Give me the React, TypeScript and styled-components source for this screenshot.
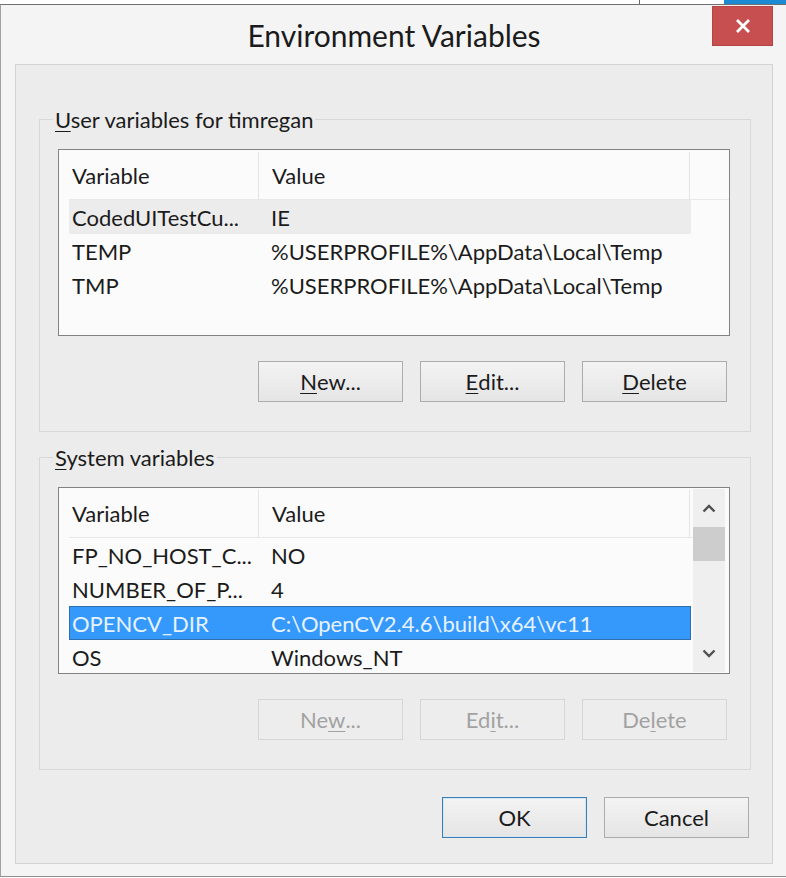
import React from "react";
import styled, { createGlobalStyle } from "styled-components";

const GlobalStyle = createGlobalStyle`
  html, body { margin: 0; padding: 0; background: #ffffff; }
  body { font-family: "Lato", "Open Sans", sans-serif; color: #1b1b1b; }
  * { box-sizing: border-box; }
`;

const Page = styled.div`
  width: 786px;
  height: 878px;
  overflow: hidden;
  background: #ffffff;
  display: flex;
  flex-direction: column;
`;

const BackStrip = styled.div`
  height: 4px;
  display: flex;
  flex: none;
`;

const BackPane = styled.div<{ $w: number; $bg: string; $edge?: boolean }>`
  width: ${(p) => p.$w}px;
  flex: none;
  background: ${(p) => p.$bg};
  border-right: ${(p) => (p.$edge ? "1px solid #6a6a6a" : "none")};
`;

const Dialog = styled.div`
  height: 873px;
  flex: none;
  background: #f5f4f4;
  border-top: 1px solid #6e6e6e;
  border-left: 1px solid #a0a0a0;
  border-bottom: 1px solid #8c8c8c;
  padding: 0 13px 12px 14px;
  display: flex;
  flex-direction: column;
`;

const TitleBar = styled.div`
  height: 59px;
  flex: none;
  display: grid;
  grid-template-columns: 61px 1fr 61px;
  align-items: start;
`;

const Title = styled.div`
  grid-column: 2;
  align-self: center;
  text-align: center;
  font-size: 30px;
  line-height: 34px;
  padding-top: 1px;
  color: #1b1b1b;
`;

const CloseButton = styled.div`
  grid-column: 3;
  margin-top: 1px;
  width: 61px;
  height: 40px;
  background: #c84f4f;
  border: 1px solid #b54444;
  display: flex;
  align-items: center;
  justify-content: center;
`;

const Panel = styled.div`
  height: 800px;
  flex: none;
  background: #ececec;
  border: 1px solid #d3d3d3;
  padding: 54px 21px 25px 23px;
  display: flex;
  flex-direction: column;
`;

const Group = styled.div<{ $gap?: number }>`
  border: 1px solid #d8d8d8;
  margin-top: ${(p) => p.$gap ?? 0}px;
  padding: 0 20px 29px 18px;
  display: flex;
  flex-direction: column;
`;

const Legend = styled.div`
  align-self: flex-start;
  margin: -15px 0 0 -5px;
  padding: 0 2px;
  height: 30px;
  line-height: 30px;
  font-size: 22px;
  background: #ececec;
  color: #1b1b1b;
`;

const Mn = styled.span`
  text-decoration: underline;
  text-decoration-thickness: 1px;
  text-underline-offset: 3px;
`;

const List = styled.div`
  margin-top: 14px;
  height: 187px;
  border: 1px solid #828282;
  background: #fbfbfb;
  display: flex;
  overflow: hidden;
`;

const ListMain = styled.div`
  flex: 1;
  padding-left: 10px;
  display: flex;
  flex-direction: column;
  min-width: 0;
`;

const Header = styled.div`
  height: 50px;
  flex: none;
  display: grid;
  grid-template-columns: 189px 432px;
  border-bottom: 1px solid #e8e8e8;
  font-size: 22px;
`;

const HeaderCell = styled.div<{ $second?: boolean }>`
  display: flex;
  align-items: center;
  padding-left: ${(p) => (p.$second ? 13 : 3)}px;
  margin: 2px 0 0;
  border-left: ${(p) => (p.$second ? "1px solid #e4e4e4" : "none")};
  border-right: ${(p) => (p.$second ? "1px solid #e4e4e4" : "none")};
`;

type RowKind = "plain" | "soft" | "selected";

const Row = styled.div<{ $kind: RowKind }>`
  height: 34px;
  flex: none;
  width: 622px;
  display: grid;
  grid-template-columns: 189px 432px;
  align-items: center;
  font-size: 22px;
  white-space: nowrap;
  background: ${(p) =>
    p.$kind === "selected" ? "#3598fb" : p.$kind === "soft" ? "#ececec" : "transparent"};
  border: 1px solid ${(p) => (p.$kind === "selected" ? "#2e6fb0" : "transparent")};
  color: ${(p) => (p.$kind === "selected" ? "#e6f3ff" : "#1b1b1b")};
`;

const Cell = styled.div<{ $second?: boolean }>`
  padding-left: ${(p) => (p.$second ? 12 : 2)}px;
  overflow: hidden;
`;

const ScrollBar = styled.div`
  width: 32px;
  flex: none;
  margin: 1px 4px 1px 0;
  background: #efefef;
  display: flex;
  flex-direction: column;
`;

const ArrowBox = styled.div`
  height: 38px;
  flex: none;
  display: flex;
  align-items: center;
  justify-content: center;
`;

const Thumb = styled.div`
  height: 34px;
  flex: none;
  background: #cdcdcd;
`;

const Track = styled.div`
  flex: 1;
`;

const ButtonRow = styled.div<{ $top: number; $right: number }>`
  display: flex;
  justify-content: flex-end;
  gap: 17px;
  margin-top: ${(p) => p.$top}px;
  padding-right: ${(p) => p.$right}px;
`;

const Button = styled.div<{ $disabled?: boolean; $default?: boolean }>`
  width: 145px;
  height: 41px;
  display: flex;
  align-items: center;
  justify-content: center;
  font-size: 22px;
  border: 1px solid
    ${(p) => (p.$default ? "#3d7db3" : p.$disabled ? "#d6d6d6" : "#acacac")};
  background: ${(p) =>
    p.$disabled ? "#ededed" : "linear-gradient(#f3f3f3, #e5e5e5)"};
  box-shadow: ${(p) => (p.$default ? "inset 0 0 0 1px #d3e6f6" : "none")};
  color: ${(p) => (p.$disabled ? "#a2a2a2" : "#1b1b1b")};
`;

const Chevron = ({ up }: { up?: boolean }) => (
  <svg width="14" height="9" viewBox="0 0 14 9">
    <polyline
      points={up ? "1.5,7.5 7,2 12.5,7.5" : "1.5,1.5 7,7 12.5,1.5"}
      fill="none"
      stroke="#505050"
      strokeWidth="2.4"
    />
  </svg>
);

const CloseGlyph = () => (
  <svg width="16" height="16" viewBox="0 0 16 16">
    <path d="M2 2 L14 14 M14 2 L2 14" stroke="#ffffff" strokeWidth="2.8" fill="none" />
  </svg>
);

type Variable = { name: string; value: string; kind: RowKind };

const userVars: Variable[] = [
  { name: "CodedUITestCu...", value: "IE", kind: "soft" },
  { name: "TEMP", value: "%USERPROFILE%\\AppData\\Local\\Temp", kind: "plain" },
  { name: "TMP", value: "%USERPROFILE%\\AppData\\Local\\Temp", kind: "plain" },
];

const systemVars: Variable[] = [
  { name: "FP_NO_HOST_C...", value: "NO", kind: "plain" },
  { name: "NUMBER_OF_P...", value: "4", kind: "plain" },
  { name: "OPENCV_DIR", value: "C:\\OpenCV2.4.6\\build\\x64\\vc11", kind: "selected" },
  { name: "OS", value: "Windows_NT", kind: "plain" },
];

const VarList = ({ rows, scroll }: { rows: Variable[]; scroll?: boolean }) => (
  <List>
    <ListMain>
      <Header>
        <HeaderCell>Variable</HeaderCell>
        <HeaderCell $second>Value</HeaderCell>
      </Header>
      {rows.map((r) => (
        <Row key={r.name} $kind={r.kind}>
          <Cell>{r.name}</Cell>
          <Cell $second>{r.value}</Cell>
        </Row>
      ))}
    </ListMain>
    {scroll && (
      <ScrollBar>
        <ArrowBox>
          <Chevron up />
        </ArrowBox>
        <Thumb />
        <Track />
        <ArrowBox>
          <Chevron />
        </ArrowBox>
      </ScrollBar>
    )}
  </List>
);

export default function App() {
  return (
    <>
      <GlobalStyle />
      <Page>
        <BackStrip>
          <BackPane $w={640} $bg="#ffffff" $edge />
          <BackPane $w={84} $bg="#ffffff" />
          <BackPane $w={62} $bg="#1b8ad3" />
        </BackStrip>
        <Dialog>
          <TitleBar>
            <Title>Environment Variables</Title>
            <CloseButton>
              <CloseGlyph />
            </CloseButton>
          </TitleBar>
          <Panel>
            <Group>
              <Legend>
                <Mn>U</Mn>ser variables for timregan
              </Legend>
              <VarList rows={userVars} />
              <ButtonRow $top={25} $right={3}>
                <Button>
                  <Mn>N</Mn>ew...
                </Button>
                <Button>
                  <Mn>E</Mn>dit...
                </Button>
                <Button>
                  <Mn>D</Mn>elete
                </Button>
              </ButtonRow>
            </Group>
            <Group $gap={25}>
              <Legend>
                <Mn>S</Mn>ystem variables
              </Legend>
              <VarList rows={systemVars} scroll />
              <ButtonRow $top={25} $right={3}>
                <Button $disabled>
                  Ne<Mn>w</Mn>...
                </Button>
                <Button $disabled>
                  Ed<Mn>i</Mn>t...
                </Button>
                <Button $disabled>
                  De<Mn>l</Mn>ete
                </Button>
              </ButtonRow>
            </Group>
            <ButtonRow $top={27} $right={2}>
              <Button $default>OK</Button>
              <Button>Cancel</Button>
            </ButtonRow>
          </Panel>
        </Dialog>
      </Page>
    </>
  );
}
